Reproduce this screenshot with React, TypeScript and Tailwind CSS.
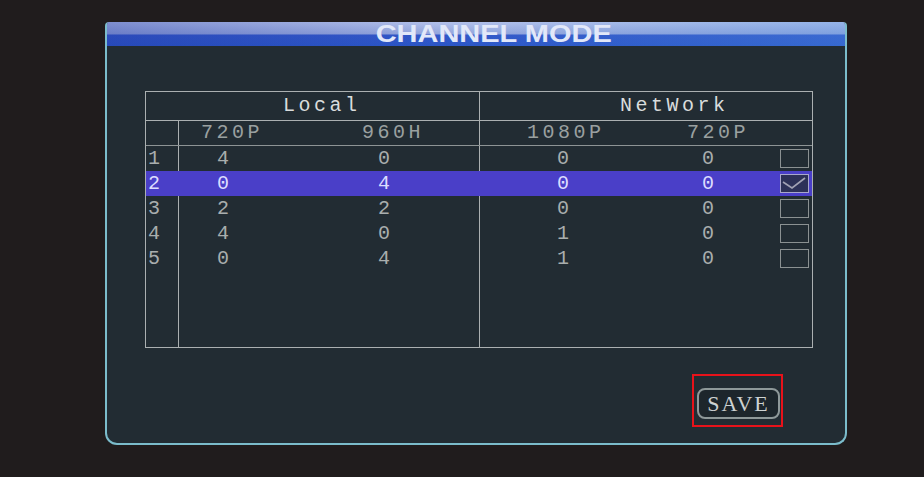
import React from 'react';

type Row = { idx: number; l720: number; l960: number; n1080: number; n720: number; selected?: boolean };

const rows: Row[] = [
  { idx: 1, l720: 4, l960: 0, n1080: 0, n720: 0 },
  { idx: 2, l720: 0, l960: 4, n1080: 0, n720: 0, selected: true },
  { idx: 3, l720: 2, l960: 2, n1080: 0, n720: 0 },
  { idx: 4, l720: 4, l960: 0, n1080: 1, n720: 0 },
  { idx: 5, l720: 0, l960: 4, n1080: 1, n720: 0 },
];

const mono = "font-['Liberation_Mono',monospace] text-[20px] tracking-[3.5px] leading-none";

const CheckBox: React.FC<{ checked?: boolean }> = ({ checked }) => (
  <div
    className={
      'ml-auto mr-[3px] w-[29px] h-[19px] border-[1.5px] ' +
      (checked ? 'border-[#a9a8cc] bg-[#2d3158]' : 'border-[#8b9192]')
    }
  >
    {checked && (
      <svg width="26" height="16" viewBox="0 0 26 16" className="block">
        <polyline points="2,7 11,13 24,3" fill="none" stroke="#a2a2b4" strokeWidth="1.6" />
      </svg>
    )}
  </div>
);

export default function App() {
  return (
    <div className="w-[924px] h-[477px] bg-[#201c1d] pt-[22px] pl-[105px] overflow-hidden">
      <div className="w-[742px] h-[423px] bg-[#222c33] border-x-2 border-b-2 border-[#7bbccb] rounded-t-[4px] rounded-b-[12px] overflow-hidden flex flex-col">
        {/* title bar */}
        <div className="h-[24px] shrink-0 flex items-center justify-center pl-[36px] bg-[linear-gradient(90deg,rgba(30,50,160,0.35)_0%,rgba(30,50,160,0)_45%,rgba(80,150,230,0.3)_100%),linear-gradient(180deg,#b3c1ea_0%,#93a5dc_50%,#3257c8_54%,#2b56c6_100%)]">
          <span className="inline-block scale-x-[1.26] font-['Liberation_Sans',Arial,sans-serif] font-bold text-[23px] leading-[24px] text-[#e2e8f9]">
            CHANNEL MODE
          </span>
        </div>

        {/* table */}
        <div className="ml-[38px] mt-[45px] w-[668px] h-[257px] border border-[#abb0b1] flex flex-col text-[#a9aeae]">
          <div className="h-[29px] shrink-0 border-b border-[#abb0b1] flex">
            <div className="w-[334px] border-r border-[#abb0b1] flex items-center pl-[137px]">
              <span className={mono + ' text-[#d9dcdc]'}>Local</span>
            </div>
            <div className="flex-1 flex items-center pl-[140px]">
              <span className={mono + ' text-[#d9dcdc]'}>NetWork</span>
            </div>
          </div>

          <div className="h-[25px] shrink-0 border-b border-[#8e9495] flex">
            <div className="w-[33px] border-r border-[#abb0b1]" />
            <div className="w-[301px] border-r border-[#abb0b1] flex items-center text-[#9aa0a0]">
              <div className={'w-[161px] pl-[22px] ' + mono}>720P</div>
              <div className={'pl-[22px] ' + mono}>960H</div>
            </div>
            <div className="flex-1 flex items-center text-[#9aa0a0]">
              <div className={'w-[160px] pl-[47px] ' + mono}>1080P</div>
              <div className={'pl-[47px] ' + mono}>720P</div>
            </div>
          </div>

          {rows.map((r) => {
            const line = r.selected ? 'border-transparent' : 'border-[#abb0b1]';
            return (
              <div
                key={r.idx}
                className={'h-[25px] shrink-0 flex ' + (r.selected ? 'bg-[#4a3fc8] text-[#dcdcff]' : '')}
              >
                <div className={'w-[33px] border-r flex items-center pl-[2px] ' + line}>
                  <span className={mono}>{r.idx}</span>
                </div>
                <div className={'w-[301px] border-r flex items-center ' + line}>
                  <div className={'w-[161px] pl-[38px] ' + mono}>{r.l720}</div>
                  <div className={'pl-[38px] ' + mono}>{r.l960}</div>
                </div>
                <div className="flex-1 flex items-center">
                  <div className={'w-[160px] pl-[77px] ' + mono}>{r.n1080}</div>
                  <div className={'pl-[62px] ' + mono}>{r.n720}</div>
                  <CheckBox checked={r.selected} />
                </div>
              </div>
            );
          })}

          <div className="flex-1 flex">
            <div className="w-[33px] border-r border-[#abb0b1]" />
            <div className="w-[301px] border-r border-[#abb0b1]" />
            <div className="flex-1" />
          </div>
        </div>

        {/* save */}
        <div className="mt-[26px] flex justify-end pr-[62px]">
          <div className="w-[91px] h-[53px] border-2 border-[#e8121a] pt-[12px] pl-[3px]">
            <button className="w-[83px] h-[31px] rounded-[8px] border-2 border-[#8e9899] bg-[#1d262c] flex items-center justify-center font-['Liberation_Serif',serif] text-[22px] tracking-[2px] leading-none text-[#cdd2d2]">
              SAVE
            </button>
          </div>
        </div>
      </div>
    </div>
  );
}
